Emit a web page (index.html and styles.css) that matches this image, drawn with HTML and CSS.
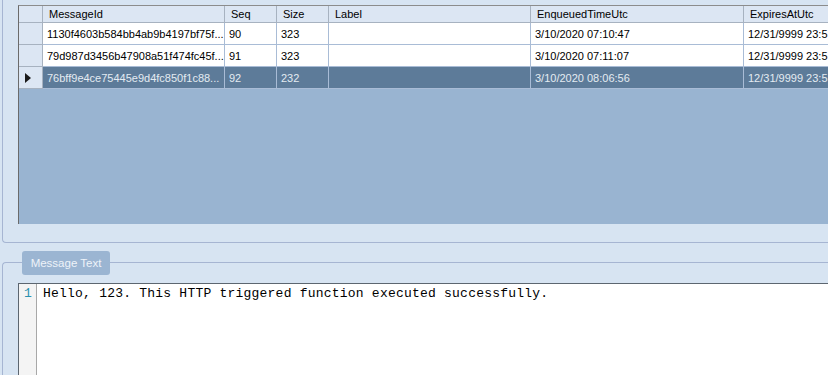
FILE: index.html
```html
<!DOCTYPE html>
<html>
<head>
<meta charset="utf-8">
<link rel="stylesheet" href="styles.css">
</head>
<body>
<div class="page">
  <section class="group group-top">
    <div class="grid">
      <div class="table">
        <div class="hd rowhd"></div>
        <div class="hd">MessageId</div>
        <div class="hd">Seq</div>
        <div class="hd">Size</div>
        <div class="hd">Label</div>
        <div class="hd">EnqueuedTimeUtc</div>
        <div class="hd">ExpiresAtUtc</div>

        <div class="rowhd"></div>
        <div class="cell">1130f4603b584bb4ab9b4197bf75f...</div>
        <div class="cell">90</div>
        <div class="cell">323</div>
        <div class="cell"></div>
        <div class="cell">3/10/2020 07:10:47</div>
        <div class="cell">12/31/9999 23:5</div>

        <div class="rowhd"></div>
        <div class="cell">79d987d3456b47908a51f474fc45f...</div>
        <div class="cell">91</div>
        <div class="cell">323</div>
        <div class="cell"></div>
        <div class="cell">3/10/2020 07:11:07</div>
        <div class="cell">12/31/9999 23:5</div>

        <div class="rowhd current"><svg class="arrow" width="7" height="10" viewBox="0 0 7 10"><polygon points="0,0 6,5 0,10" fill="#1a1a1a"/></svg></div>
        <div class="cell sel">76bff9e4ce75445e9d4fc850f1c88...</div>
        <div class="cell sel">92</div>
        <div class="cell sel">232</div>
        <div class="cell sel"></div>
        <div class="cell sel">3/10/2020 08:06:56</div>
        <div class="cell sel">12/31/9999 23:5</div>
      </div>
    </div>
  </section>

  <section class="group group-msg">
    <div class="legend">Message Text</div>
    <div class="editor">
      <div class="gutter">1</div>
      <div class="code">Hello, 123. This HTTP triggered function executed successfully.</div>
    </div>
  </section>
</div>
</body>
</html>
```

FILE: styles.css
```css
html, body {
  margin: 0;
  padding: 0;
}
body {
  background: #d7e4f2;
  font-family: "Liberation Sans", Arial, sans-serif;
}
.page {
  width: 828px;
  height: 375px;
  overflow: hidden;
  display: flex;
  flex-direction: column;
  background: #d7e4f2;
}
.group {
  margin-left: 2px;
  border-left: 1px solid #a6b5d2;
  box-sizing: border-box;
}
.group-top {
  height: 243px;
  flex: none;
  border-bottom: 1px solid #a6b5d2;
  border-bottom-left-radius: 4px;
  padding: 5px 0 18px 15px;
}
.grid {
  height: 219px;
  width: 810px;
  box-sizing: border-box;
  border-left: 1px solid #6b6b6b;
  border-top: 1px solid #8c8c8c;
  background: #99b4d1;
  overflow: hidden;
}
.table {
  display: grid;
  grid-template-columns: 24px 182px 52px 52px 202px 213px 85px;
  grid-template-rows: 17px 22px 22px 22px;
  font-size: 11px;
  color: #000;
}
.table > div {
  box-sizing: border-box;
  white-space: nowrap;
  overflow: hidden;
  display: flex;
  align-items: center;
}
.hd {
  background: #dce6f3;
  border-right: 1px solid #a7b2c0;
  border-bottom: 1px solid #a7b2c0;
  padding-left: 6px;
}
.rowhd {
  background: #dce6f3;
  border-right: 1px solid #a7b2c0;
  border-bottom: 1px solid #a7b2c0;
}
.hd.rowhd {
  padding-left: 0;
}
.cell {
  background: #ffffff;
  border-right: 1px solid #a9bcd6;
  border-bottom: 1px solid #a9bcd6;
  padding-left: 4px;
}
.table > .cell:nth-child(7n) {
  border-right: none;
}
.cell.sel {
  background: #5d7b99;
  color: #e4ebf2;
}
.rowhd.current {
  padding-left: 6px;
}
.group-msg {
  flex: 1;
  margin-top: 19px;
  border-top: 1px solid #a6b5d2;
  border-top-left-radius: 4px;
  display: flex;
  flex-direction: column;
  min-height: 0;
}
.legend {
  margin-top: -12px;
  margin-left: 19px;
  width: 88px;
  height: 24px;
  flex: none;
  box-sizing: border-box;
  background: #9bb5d2;
  border-radius: 3px;
  color: #eef3f9;
  font-size: 11.5px;
  display: flex;
  align-items: center;
  justify-content: center;
}
.editor {
  margin-top: 8px;
  margin-left: 15px;
  flex: 1;
  display: flex;
  background: #ffffff;
  border-left: 1px solid #5c6670;
  border-top: 1px solid #5c6670;
  font-family: "Liberation Mono", "Courier New", monospace;
  font-size: 13px;
  line-height: 15px;
}
.gutter {
  width: 18px;
  flex: none;
  box-sizing: border-box;
  background: #f4f4f4;
  border-right: 1px solid #a8a8a8;
  color: #2b91af;
  padding: 2px 0 0 5px;
}
.code {
  padding: 2px 0 0 6px;
  color: #000;
  white-space: pre;
  letter-spacing: 0.22px;
}
```
